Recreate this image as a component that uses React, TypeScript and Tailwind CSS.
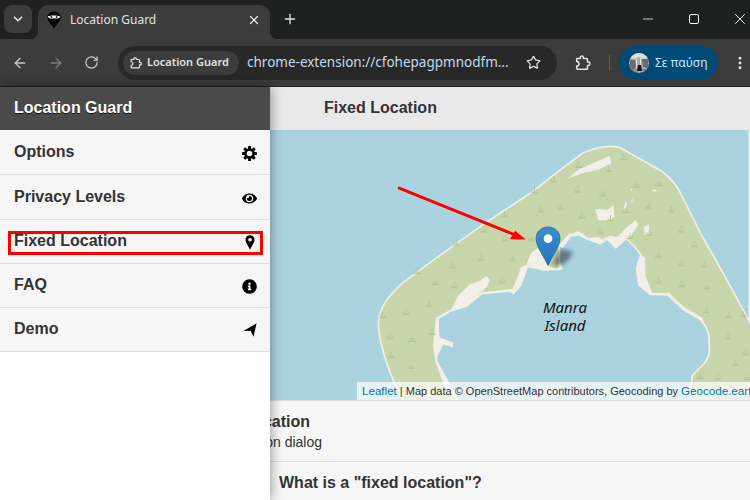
import React from "react";
import { ArrowLeft, ArrowRight, RotateCw, Star, X, Plus, Minus, ChevronDown, EllipsisVertical } from "lucide-react";
import { FaEye, FaInfoCircle } from "react-icons/fa";

const tufts: [number, number][] = [
  [763,82],[628,106],[718,118],[553,150],[802,165],[871,160],[625,180],[700,192],[495,182],[514,240],[574,232],[405,255],[638,259],[772,242],[838,228],[907,240],[724,266],[343,300],[692,303],[409,327],[484,327],[260,340],[783,320],[841,310],[937,300],[976,345],[868,376],[334,385],[428,387],[248,408],[142,425],[937,402],[1006,405],[196,459],[254,468],[397,454],[868,454],[940,465],[1015,471],[178,525],[109,549],[38,558],[1012,543],[1081,558],[1124,555],[187,609],[61,622],[127,630],[1078,622],[64,678],[124,711],[1130,670],[1099,702],[993,741],[1048,745],[1135,745],
];

function Puzzle({ className }: { className?: string }) {
  return (
    <svg viewBox="0 0 20 20" className={className} fill="none" stroke="currentColor" strokeWidth="1.7" strokeLinejoin="round">
      <path d="M3 5H7V3.9a1.7 1.7 0 0 1 3.4 0V5H14a1 1 0 0 1 1 1V9h.9a1.9 1.9 0 0 1 0 3.8H15V16a1 1 0 0 1-1 1H4a1 1 0 0 1-1-1v-2.6a2.6 2.6 0 0 0 0-5.2V5z" />
    </svg>
  );
}

function Favicon() {
  return (
    <svg viewBox="0 0 16 18" className="w-4 h-[18px]">
      <path d="M8 0.5C4 0.5 1.4 3.2 1.4 6.6c0 3.6 4.2 7.4 6.6 10.9C10.4 14 14.6 10.2 14.6 6.6 14.6 3.2 12 0.5 8 0.5z" fill="#050505" />
      <path d="M2 5.2C5 4.2 11 4.2 14 5.2 14.2 7 11 8.2 8 7.2 5 8.2 1.8 7 2 5.2z" fill="#fff" />
      <circle cx="5.4" cy="6" r="1" fill="#222" />
      <circle cx="10.6" cy="6" r="1" fill="#222" />
    </svg>
  );
}

function Gear() {
  return (
    <svg viewBox="0 0 14 14" className="w-[15px] h-[15px]">
      <g fill="#000">
        <circle cx="7" cy="7" r="5" />
        {[0, 45, 90, 135, 180, 225, 270, 315].map((a) => (
          <rect key={a} x="5.6" y="0" width="2.8" height="3" rx="0.4" transform={`rotate(${a} 7 7)`} />
        ))}
      </g>
      <circle cx="7" cy="7" r="2.6" fill="#f6f6f6" />
    </svg>
  );
}

function Pin() {
  return (
    <svg viewBox="0 0 10 15" className="w-[10px] h-[15px]">
      <path d="M5 0.3C2.3 0.3 0.4 2.2 0.4 4.8 0.4 7.6 3.4 11 5 14.7 6.6 11 9.6 7.6 9.6 4.8 9.6 2.2 7.7 0.3 5 0.3z" fill="#000" />
      <circle cx="5" cy="4.7" r="1.8" fill="#f6f6f6" />
    </svg>
  );
}

function NavArrow() {
  return (
    <svg viewBox="0 0 14 14" className="w-[14px] h-[14px]">
      <path d="M13.6 0.3L0.3 8L7.6 7.8L10.4 13.7Z" fill="#000" />
    </svg>
  );
}

function MapArt() {
  return (
    <svg viewBox="-1110 0 2250 813" className="block w-full h-full">
      <defs>
        <linearGradient id="mk" x1="0" y1="0" x2="0" y2="1">
          <stop offset="0" stopColor="#3f8ecb" />
          <stop offset="1" stopColor="#2273c0" />
        </linearGradient>
        <filter id="bl"><feGaussianBlur stdDeviation="7" /></filter>
      </defs>
      <rect x="-1110" y="0" width="2250" height="813" fill="#aad3df" />
      <path
        d="M110 830 C70 770 25 650 25 580 C28 530 60 495 105 455 L200 385 L340 285 L490 185 L560 130 L640 70 C680 52 720 45 750 52 L880 125 C905 145 925 170 935 190 L1000 320 L1060 425 L1150 590 L1150 830 L962 830 L970 740 C990 715 1022 700 1022 660 L1020 620 C1015 590 1000 565 950 540 L900 495 L845 495 L810 465 L805 410 L815 375 L795 350 L770 325 L740 350 L710 325 L690 340 L650 325 L625 310 L600 315 L570 350 L570 420 L520 420 L470 410 L450 470 L430 485 L340 490 L290 530 L240 545 L205 565 L205 620 L200 700 L230 750 L270 830 Z"
        fill="#c8d7ab"
        stroke="#f2efe9"
        strokeWidth="5"
        strokeLinejoin="round"
      />
      <g fill="#f2efe9">
        <path d="M594 147 L630 118 L690 92 L722 78 L727 100 L690 118 L640 130 Z" />
        <path d="M678 238 L715 240 L733 226 L736 262 L722 272 L688 272 Z" />
        <path d="M826 290 L840 285 L843 312 L826 316 Z" />
        <path d="M785 178 L790 176 L788 186 Z M850 181 L862 180 L862 185 L850 185 Z M768 218 L775 216 L770 236 L763 236 Z M786 210 L792 208 L788 222 Z" />
        <path d="M470 405 L485 370 L505 355 L525 380 L540 410 L565 420 L575 395 L580 420 L520 424 Z" />
        <path d="M570 350 L590 322 L625 305 L640 312 L655 325 L690 322 L705 335 L720 318 L745 322 L770 295 L800 272 L808 285 L785 320 L760 340 L740 358 L715 332 L695 345 L650 330 L628 318 L605 322 L580 355 Z" />
        <path d="M240 548 L265 500 L300 465 L330 455 L350 440 L362 450 L352 472 L335 488 L292 532 L250 545 Z" />
        <path d="M335 490 L430 478 L445 440 L455 412 L478 405 L470 430 L455 470 L432 495 L420 485 L345 495 Z" />
        <path d="M198 565 L225 550 L240 550 L205 570 L210 625 L250 640 L250 655 L220 645 L200 690 L232 750 L262 800 L230 790 L198 700 L190 650 Z" />
        <path d="M815 375 L828 385 L830 440 L850 490 L900 490 L930 525 L1000 565 L1022 620 L1024 660 L1015 600 L990 570 L945 545 L895 498 L845 497 L808 470 L800 420 Z" />
      </g>
      <path d="M572 358 L610 365 L600 390 L575 408 L548 406 Z" fill="#000" opacity="0.42" filter="url(#bl)" />
      <g stroke="#b0c096" strokeWidth="2.5" fill="none" strokeLinecap="round">
        {tufts.map(([x, y], i) => (
          <path key={i} d={`M${x - 10} ${y + 7}H${x + 10} M${x - 8} ${y - 1}L${x - 3} ${y + 6} M${x} ${y - 9}V${y + 6} M${x + 8} ${y - 1}L${x + 3} ${y + 6}`} />
        ))}
      </g>
      <line x1="88" y1="175" x2="440" y2="317" stroke="#ff0000" strokeWidth="9" strokeLinecap="round" />
      <path d="M469 330 L421 329 L437 303 Z" fill="#ff0000" />
      <path
        d="M536 408 C522 378 500 350 500 327 C500 306 516 292 536 292 C556 292 572 306 572 327 C572 350 550 378 536 408 Z"
        fill="url(#mk)"
        stroke="#2b6f9f"
        strokeWidth="2.5"
      />
      <circle cx="536" cy="327" r="13" fill="#fff" />
    </svg>
  );
}

const items = [
  { label: "Options", h: "h-[45px] pt-[13px]", icon: <Gear /> },
  { label: "Privacy Levels", h: "h-[45px] pt-[13px]", icon: <FaEye className="w-[15px] h-[15px]" /> },
  { label: "Fixed Location", h: "h-[44px] pt-[12px]", icon: <Pin /> },
  { label: "FAQ", h: "h-[44px] pt-[12px]", icon: <FaInfoCircle className="w-[15px] h-[15px]" /> },
  { label: "Demo", h: "h-[44px] pt-[12px]", icon: <NavArrow /> },
];

export default function App() {
  return (
    <div className="relative w-[750px] h-[500px] overflow-hidden bg-[#f6f6f6] font-['Liberation_Sans',sans-serif]">
      {/* Tab strip */}
      <div className="flex h-[39px] bg-[#1f2121] font-['Noto_Sans',sans-serif] text-[#e3e3e3]">
        <div className="mt-[5px] ml-[4px] w-[28px] h-[28px] rounded-lg bg-[#3c3c3c] flex items-center justify-center">
          <ChevronDown className="w-[14px] h-[14px]" strokeWidth={3} />
        </div>
        <div className="relative mt-[5px] ml-[6px] w-[232px] h-[34px] rounded-t-[10px] bg-[#3c3c3c] flex items-center pl-[8px] pr-[9px] pb-[4px]">
          <div className="absolute -left-[8px] bottom-0 w-[8px] h-[8px] bg-[radial-gradient(circle_at_0_0,#1f2121_8px,#3c3c3c_8.5px)]" />
          <div className="absolute -right-[8px] bottom-0 w-[8px] h-[8px] bg-[radial-gradient(circle_at_100%_0,#1f2121_8px,#3c3c3c_8.5px)]" />
          <Favicon />
          <span className="ml-[8px] text-[12px] flex-1">Location Guard</span>
          <X className="w-[14px] h-[14px]" strokeWidth={2.2} />
        </div>
        <Plus className="ml-[12px] mt-[11px] w-[16px] h-[16px]" strokeWidth={2} />
        <div className="flex-1" />
        <Minus className="mt-[11px] w-[16px] h-[16px] text-white" strokeWidth={1.2} />
        <div className="mt-[14px] ml-[33px] w-[10px] h-[10px] rounded-[2px] border border-white" />
        <X className="mt-[10px] ml-[32px] mr-[1px] w-[18px] h-[18px] text-white" strokeWidth={1.2} />
      </div>

      {/* Toolbar */}
      <div className="flex items-center h-[47px] bg-[#3c3c3c] text-[#c7c7c7] font-['Noto_Sans',sans-serif]">
        <ArrowLeft className="ml-[12px] w-[16px] h-[16px]" strokeWidth={2} />
        <ArrowRight className="ml-[20px] w-[16px] h-[16px] text-[#7d7d7d]" strokeWidth={2} />
        <RotateCw className="ml-[20px] w-[15px] h-[15px]" strokeWidth={2} />
        <div className="ml-[19px] w-[439px] h-[34px] rounded-full bg-[#282828] flex items-center pl-[5px] pr-[16px]">
          <div className="w-[116px] h-[24px] rounded-full bg-[#3c3c3c] flex items-center pl-[6px]">
            <Puzzle className="w-[14px] h-[14px] text-[#e3e3e3]" />
            <span className="ml-[4px] text-[11px] leading-[22px] pb-[2px] font-semibold text-[#e3e3e3] whitespace-nowrap">Location Guard</span>
          </div>
          <span className="ml-[8px] text-[13.5px] text-[#c7d9e8] whitespace-nowrap flex-1">chrome-extension://cfohepagpmnodfm...</span>
          <Star className="w-[15px] h-[15px] text-[#e3e3e3]" strokeWidth={2} />
        </div>
        <Puzzle className="ml-[17px] w-[18px] h-[18px] text-[#e3e3e3]" />
        <div className="ml-[17px] w-px h-[16px] bg-[#5e5e5e]" />
        <div className="ml-[9px] w-[99px] h-[34px] rounded-full bg-[#004a77] flex items-center pl-[10px]">
          <svg viewBox="0 0 20 20" className="w-[20px] h-[20px]">
            <defs>
              <clipPath id="av"><circle cx="10" cy="10" r="10" /></clipPath>
            </defs>
            <g clipPath="url(#av)">
              <rect width="20" height="20" fill="#a9a9a9" />
              <path d="M0 0h20v5l-6 1-4-2-5 2-5-1z" fill="#dedede" />
              <path d="M1 7h5l1 7-3 3-3-3zM13 6h6v9l-5-1z" fill="#6b6b6b" />
              <path d="M7 6h1v9H7zM11 5h1v9h-1z" fill="#e8e8e8" />
              <path d="M9 12h3l1 6h-5z" fill="#1c1c1c" />
              <path d="M0 16h8l-1 4H2zM13 16h7v4h-6z" fill="#8a8a8a" />
            </g>
          </svg>
          <span className="ml-[6px] text-[12px] text-[#c2e7ff] whitespace-nowrap">Σε παύση</span>
        </div>
        <EllipsisVertical className="ml-[14px] w-[16px] h-[16px] text-[#e3e3e3]" strokeWidth={2.4} />
      </div>
      <div className="h-px bg-[#222]" />

      {/* Page */}
      <div className="h-[43px] bg-[#e9e9e9] flex items-center pl-[324px] pb-[2px] text-[16px] font-bold text-[#333]">Fixed Location</div>
      <div className="relative h-[271px] overflow-hidden border-b border-[#ddd]">
        <MapArt />
        <div className="absolute left-[357px] bottom-0 h-[18px] w-[393px] overflow-hidden bg-white/70 pl-[5px] text-[11px] leading-[18px] text-[#333] whitespace-nowrap">
          <span className="text-[#0078a8] text-[11.6px]">Leaflet</span> | Map data © OpenStreetMap contributors, Geocoding by <span className="text-[#0078a8] text-[11.6px]">Geocode.earth</span>
        </div>
      </div>
      <div className="h-[61px] border-b border-[#ddd] bg-[#f6f6f6] text-[#333] pt-[11px]">
        <div className="w-[310px] text-right text-[16px] leading-[20px] font-bold">Fixed location</div>
        <div className="w-[322px] text-right text-[14px] leading-[20px]">Open the location dialog</div>
      </div>
      <div className="pl-[279px] pt-[11px] text-[16px] leading-[20px] font-bold text-[#333]">What is a "fixed location"?</div>

      {/* Drawer */}
      <div className="absolute left-0 top-[87px] bottom-0 w-[270px] bg-white shadow-[0_0_12px_rgba(0,0,0,0.45)]">
        <div className="h-[43px] bg-[#4a4a4a] flex items-center pl-[14px] pb-[2px] text-[16px] font-bold text-white [text-shadow:0_1px_0_#111]">Location Guard</div>
        {items.map((it) => (
          <div key={it.label} className={`${it.h} flex justify-between bg-[#f6f6f6] border-b border-[#ddd] pl-[14px] pr-[13px] text-[16px] leading-[18px] font-bold text-[#333]`}>
            <span>{it.label}</span>
            <span className="text-black mt-[3px] w-[15px] flex justify-center">{it.icon}</span>
          </div>
        ))}
        <div className="absolute left-[8px] top-[144px] w-[255px] h-[24px] border-[3px] border-[#ff0000]" />
      </div>

      {/* Manra Island label */}
      <div className="absolute left-[520px] top-[298px] w-[90px] text-center text-[15px] leading-[18px] italic text-[#111] font-['Noto_Sans',sans-serif]">
        Manra<br />Island
      </div>
    </div>
  );
}
